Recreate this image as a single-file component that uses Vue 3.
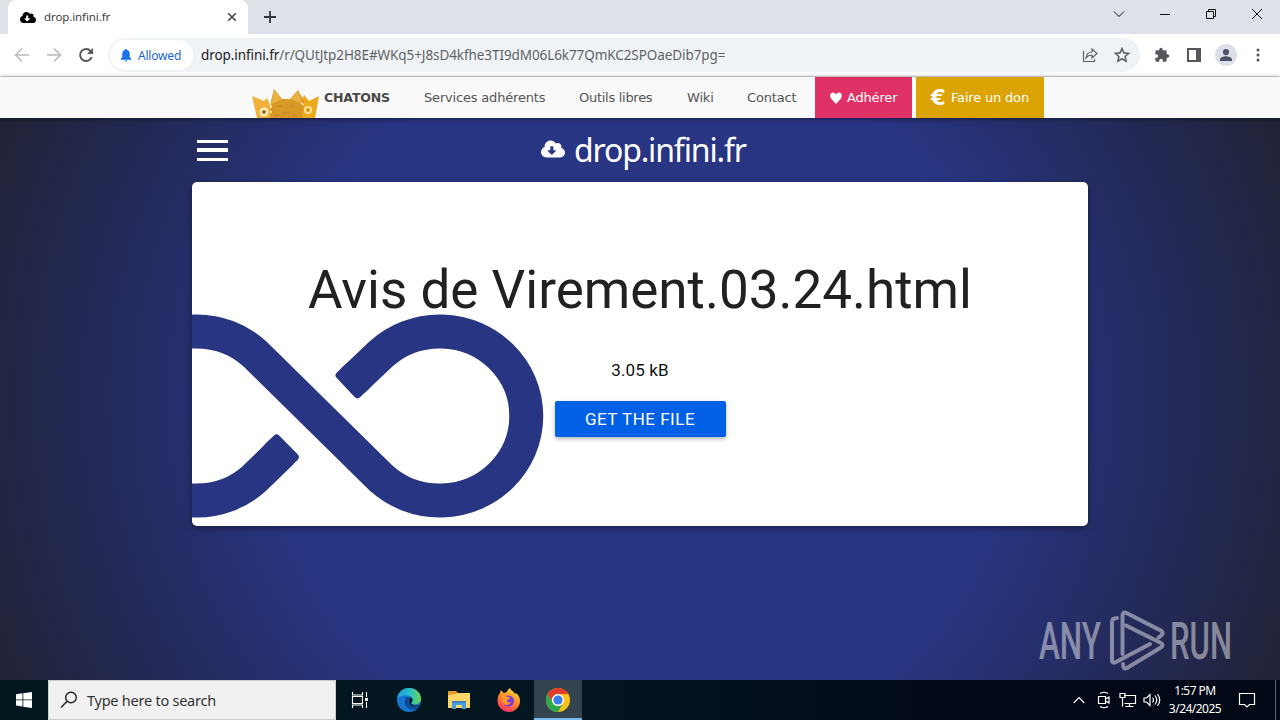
<template>
	<div class="screen">
		<!-- Tab strip -->
		<header class="tabs">
			<div class="tab">
				<svg class="favicon" viewBox="0 0 640 512"><path :d="cloudPath" /></svg>
				<span class="tab-title">drop.infini.fr</span>
				<svg class="tab-close" viewBox="0 0 10 10"><path d="M1.2 1.2l7.6 7.6M8.8 1.2L1.2 8.8" /></svg>
			</div>
			<svg class="tab-new" viewBox="0 0 12 12"><path d="M6 0v12M0 6h12" /></svg>
			<div class="window-controls">
				<svg viewBox="0 0 12 12"><path d="M1 3.5l5 5 5-5" /></svg>
				<svg viewBox="0 0 12 12"><path d="M1 6.5h10" /></svg>
				<svg viewBox="0 0 12 12"><path d="M1.5 3.5h7v7h-7zM3.5 3.5v-2h7v7h-2" /></svg>
				<svg viewBox="0 0 12 12"><path d="M1 1l10 10M11 1L1 11" /></svg>
			</div>
		</header>

		<!-- Toolbar -->
		<div class="toolbar">
			<div class="history">
				<svg class="off" viewBox="0 0 16 16"><path d="M15 8H2M8 1.5L1.5 8 8 14.5" /></svg>
				<svg class="off" viewBox="0 0 16 16"><path d="M1 8h13M8 1.5L14.5 8 8 14.5" /></svg>
				<svg viewBox="0 0 16 16"><path d="M13.7 10.2A6 6 0 1 1 12.6 4L14 5.6" /><path class="solid" d="M15 1v6H9z" /></svg>
			</div>
			<div class="address">
				<div class="chip">
					<svg viewBox="0 0 12 14"><path d="M6 0c.7 0 1.1.5 1.1 1.2C9 1.7 10 3.2 10 5.3V9l1.6 1.6v.9H.4v-.9L2 9V5.3C2 3.2 3 1.7 4.9 1.2 4.9.5 5.3 0 6 0zM4.6 12.3h2.8a1.4 1.4 0 0 1-2.8 0z" /></svg>
					<span>Allowed</span>
				</div>
				<p class="url"><span class="host">drop.infini.fr</span>/r/QUtJtp2H8E#WKq5+J8sD4kfhe3TI9dM06L6k77QmKC2SPOaeDib7pg=</p>
				<svg class="share" viewBox="0 0 16 16"><path d="M1.500 4v10.500h11V12M4 11c.5-4 2.500-6 6-6V2l5 4.500-5 4.500V8C7.500 8 5.500 9 4 11z" /></svg>
				<svg class="star" viewBox="0 0 16 16"><path d="M8 1.600l1.900 4.300 4.700.5-3.500 3.100 1 4.600L8 11.700l-4.100 2.400 1-4.600L1.400 6.400l4.700-.5z" /></svg>
			</div>
			<svg class="puzzle" viewBox="0 0 24 24"><path d="M20.500 11H19V7a2 2 0 0 0-2-2h-4V3.500a2.500 2.500 0 0 0-5 0V5H4a2 2 0 0 0-2 2v3.800h1.500a2.700 2.700 0 0 1 0 5.400H2V20a2 2 0 0 0 2 2h3.800v-1.500a2.700 2.700 0 0 1 5.400 0V22H17a2 2 0 0 0 2-2v-4h1.500a2.500 2.500 0 0 0 0-5z" /></svg>
			<svg class="panel" viewBox="0 0 14 14"><path d="M0 0h14v14H0zM2 2v10h7V2z" fill-rule="evenodd" /></svg>
			<svg class="profile" viewBox="0 0 22 22"><circle cx="11" cy="11" r="11" /><path d="M11 5a3 3 0 1 1 0 6.200A3 3 0 0 1 11 5zM5 17v-1.500c0-2 4-3.200 6-3.200s6 1.200 6 3.200V17z" /></svg>
			<svg class="dots" viewBox="0 0 4 14"><circle cx="2" cy="2" r="1.500" /><circle cx="2" cy="7" r="1.500" /><circle cx="2" cy="12" r="1.500" /></svg>
		</div>

		<!-- Association bar -->
		<nav class="infini-nav">
			<svg class="chatons" viewBox="0 0 67 30">
				<path fill="#f2b13c" d="M0 8l12 5 3-3 9 20H5z" />
				<path fill="#eba91b" d="M67 8l-10 5-5-6-9 23h20z" />
				<path fill="#d99a25" d="M22 1l8 10h8L46 2l6 11-2 17H18l1-17z" />
				<path fill="#e9b044" d="M22 1l8 10-11 5zM46 2l-8 9 12 4z" />
				<circle cx="12" cy="24" r="4.500" fill="#fff0bd" /><circle cx="12" cy="24" r="2" fill="#a46b22" />
				<circle cx="56" cy="22" r="4" fill="#ffe69a" /><circle cx="56" cy="22" r="1.900" fill="#dc920c" />
				<path class="face" d="M25 19q3-3 6 0M37 19q3-3 6 0M30 24q2 3 4 0 2 3 4 0M23 28l5-2M45 28l-5-2" />
				<path class="ray" d="M19 17v3M19 23v2M49 15l3 2" />
			</svg>
			<strong>CHATONS</strong>
			<a v-for="link in links" :key="link.text" :class="link.name">{{ link.text }}</a>
			<a class="button join">
				<svg viewBox="0 0 12 12"><path d="M6 12L1 6.500C-1 3.500.5.5 3 .5c1.500 0 2.500 1 3 2 .5-1 1.500-2 3-2 2.500 0 4 3 2 6z" /></svg>
				<span>Adhérer</span>
			</a>
			<a class="button give"><b>€</b><span>Faire un don</span></a>
		</nav>

		<main>
			<div class="title-row">
				<div class="burger"><i></i><i></i><i></i></div>
				<h1>
					<svg viewBox="0 0 640 512"><path :d="cloudPath" /></svg>
					<span>drop.infini.fr</span>
				</h1>
			</div>
			<section class="card">
				<svg class="infinity" viewBox="192 314 352 204">
					<path d="M192 331.500H196A86 84.500 0 0 1 255 354L381 478A86.500 84.500 0 1 0 381 354L353 380.500" />
					<path d="M192 500.500H196A86 84.500 0 0 0 255 478L282 451.500" />
					<rect y="-17" width="20" height="34" rx="4" transform="translate(345.700 387.500) rotate(-43.500)" />
					<rect y="-17" width="20" height="34" rx="4" transform="translate(288.500 445) rotate(135.500)" />
				</svg>
				<h2>Avis de Virement.03.24.html</h2>
				<p>3.05 kB</p>
				<button>GET THE FILE</button>
			</section>

			<svg class="watermark" viewBox="1036 608 200 64">
				<text x="1039" y="659" textLength="62" lengthAdjust="spacingAndGlyphs">ANY</text>
				<g>
					<path d="M1117 618q-5 0-5 4v38q0 4 4 2l34-18" />
					<path d="M1122.500 654v-38q0-5 4-3l35 18q3 3-3 6.500" />
					<path d="M1126 625.500l34 17q5 2.500 0 5.500l-33 20q-4 2-4-4" />
				</g>
				<text x="1170" y="659" textLength="62" lengthAdjust="spacingAndGlyphs">RUN</text>
			</svg>
		</main>

		<!-- Taskbar -->
		<footer class="taskbar">
			<div class="start"><svg viewBox="0 0 16 16"><path d="M0 2.200l6.500-.9v6.200H0zM7.300 1.200L16 0v7.500H7.300zM0 8.300h6.500v6.200L0 13.600zM7.300 8.300H16V16l-8.700-1.200z" /></svg></div>
			<div class="search">
				<svg viewBox="0 0 18 18"><circle cx="11" cy="6.500" r="5.300" /><path d="M7.200 10.300L1 16.500" /></svg>
				<span>Type here to search</span>
			</div>
			<div class="apps">
				<div class="app"><svg class="tasks" viewBox="0 0 18 18"><path d="M1.500 1v3h10V1M1.500 17v-3h10v3M1.500 5.500h10v7h-10zM15.500 1v5M15.500 11v6" /><path d="M14 7h3v3h-3z" fill="#fff" stroke="none" /></svg></div>
				<div class="app">
					<svg class="big" viewBox="0 0 24 24">
						<defs>
							<linearGradient id="edge-top" x1="0" x2="1"><stop offset="0" stop-color="#189ddf" /><stop offset=".55" stop-color="#29bfc9" /><stop offset="1" stop-color="#6bd64c" /></linearGradient>
						</defs>
						<circle cx="12" cy="12" r="12" fill="#1474cf" />
						<path fill="url(#edge-top)" d="M0 11C.7 4.500 5.500 0 12 0c7 0 12 5 12 10.500 0 4-3 6-6.200 6-2.600 0-3.800-1-3.300-2 .5-.8 1-1.500 1-2.500 0-2.500-2.500-4.500-6-4.500C5 7.500 1 9 0 11z" />
						<path fill="#0b4c98" d="M9.500 9C6 13 8 20 14 21.500c3 .7 6-.5 8-3-4 1.500-9.500 0-10.500-4.500-.3-1.500.2-3 1-4-.8-.8-1.800-1.200-3-1z" />
						<path fill="#041a26" d="M14.500 14.500c.5-.8 1-1.500 1-2.500 0-1-.7-2-1.700-2.700-1.300.8-2.200 2.500-1.800 4.700.6 3.500 4 5 7 4.500 1.800-.3 3-1 4-2-4 1.500-9.500.8-8.500-2z" />
					</svg>
				</div>
				<div class="app">
					<svg class="folder" viewBox="0 0 22 20"><path fill="#e49b25" d="M0 1h8l2 2h11v4H0z" /><path fill="#ffd768" d="M0 5l8-1 2-1h12v15H0z" /><path fill="#4a9edb" d="M4 19v-8h14v8h-4v-4H8v4z" /><path fill="#2f7dbd" d="M4 11h14v1.500H4z" /></svg>
				</div>
				<div class="app">
					<svg class="big" viewBox="0 0 24 24">
						<defs>
							<linearGradient id="fox" x1=".8" x2=".3" y2="1"><stop offset="0" stop-color="#ffe23c" /><stop offset=".5" stop-color="#ff8a25" /><stop offset="1" stop-color="#fb2c68" /></linearGradient>
						</defs>
						<path fill="url(#fox)" d="M3 5l.7-3L7 5l3-1c0-2 2-3 3-4 1 3 4 3 5 6l1-1c3 2 4 5 4 8 0 6-5 11-11 11S.5 19 .5 13C.5 10 1 7 3 5z" />
						<circle cx="11.500" cy="13" r="5.500" fill="#7b3bdc" />
						<path fill="#ff962b" d="M4 8c2-1 5-1 6 1 2 0 3 0 3 1s-3 1.500-3 3c0 1 2 2 4 1-1 3-5 4-7 2-2-1.500-3-5-3-8z" />
					</svg>
				</div>
				<div class="app active">
					<svg class="big" viewBox="0 0 24 24">
						<circle cx="12" cy="12" r="12" fill="#fbc116" />
						<path fill="#e33b2e" d="M1.600 6A12 12 0 0 1 22.400 6H12a6 6 0 0 0-5.200 9z" />
						<path fill="#2da94f" d="M1.600 6A12 12 0 0 0 12 24l5.200-9a6 6 0 0 1-10.400 0z" />
						<circle cx="12" cy="12" r="6" fill="#fff" /><circle cx="12" cy="12" r="4.600" fill="#367fe8" />
					</svg>
				</div>
			</div>
			<div class="tray">
				<svg class="up" viewBox="0 0 12 8"><path d="M.7 7L6 1.500 11.300 7" /></svg>
				<svg class="cam" viewBox="0 0 14 18"><path d="M3 2.500Q7 0 11 2.500M3 15.500q4 2.500 8 0M1.500 5.500h7v7h-7zM8.500 8L12 6v6l-3.500-2" /></svg>
				<svg class="net" viewBox="0 0 18 16"><path d="M5 3.500h11.500v8H5.500M10.500 11.500v3M6.500 14.500h8M1 1.500h5v4H1zM3.500 5.500v9" /></svg>
				<svg class="sound" viewBox="0 0 18 14"><path d="M1 5h2.500L7 1.500v11L3.500 9H1zM9.500 4.500q2 2.500 0 5M12 2.500q3.500 4.500 0 9M14.500 1q4.500 6 0 12" /></svg>
				<div class="clock"><span>1:57 PM</span><span>3/24/2025</span></div>
				<svg class="notes" viewBox="0 0 18 17"><path d="M1.500 1.500h15v11h-5L9 15l-2.500-2.500h-5z" /></svg>
				<i class="desktop"></i>
			</div>
		</footer>
	</div>
</template>

<script setup>
const cloudPath = 'M537.6 226.6c4.1-10.7 6.4-22.4 6.4-34.6 0-53-43-96-96-96-19.7 0-38.1 6-53.3 16.2C367 64.2 315.3 32 256 32c-88.4 0-160 71.6-160 160 0 2.7.1 5.4.2 8.1C40.2 219.8 0 273.2 0 336c0 79.5 64.5 144 144 144h368c70.7 0 128-57.3 128-128 0-61.9-44-113.6-102.4-125.4zM391 318L299.3 402c-6.2 6.2-16.4 6.2-22.6 0L185 318c-10.1-10.1-2.9-27.3 11.3-27.3H248V196c0-8.8 7.2-16 16-16h48c8.8 0 16 7.2 16 16v94.7h51.7c14.2 0 21.4 17.2 11.3 27.3z'

const links = [
	{ name: 'services', text: 'Services adhérents' },
	{ name: 'tools', text: 'Outils libres' },
	{ name: 'wiki', text: 'Wiki' },
	{ name: 'contact', text: 'Contact' },
]
</script>

<style>
body {
	margin: 0;
	overflow: hidden;
}
</style>

<style scoped>
* {
	box-sizing: border-box;
}
svg {
	display: block;
	flex: none;
}
.screen {
	display: flex;
	flex-direction: column;
	width: 1280px;
	height: 720px;
	font-family: "Noto Sans", "Open Sans", sans-serif;
	white-space: nowrap;
}

/* tabs */
.tabs {
	display: flex;
	height: 34px;
	padding-left: 8px;
	background: #dee1e8;
}
.tab {
	display: flex;
	align-items: center;
	width: 240px;
	padding: 0 11px 0 12px;
	background: #fff;
	border-radius: 8px 8px 0 0;
}
.favicon {
	width: 16px;
	height: 13px;
}
.tab-title {
	flex: 1;
	margin: -2px 0 0 8px;
	font-size: 11.5px;
	letter-spacing: -0.1px;
	color: #3c4043;
}
.tab-close {
	width: 10px;
	height: 10px;
	stroke: #45494d;
	stroke-width: 1.6;
}
.tab-new {
	width: 12px;
	height: 12px;
	margin: 11px 0 0 16px;
	stroke: #33363a;
	stroke-width: 1.8;
}
.window-controls {
	display: flex;
	gap: 34px;
	margin: 8px 17px 0 auto;
}
.window-controls svg {
	width: 12px;
	height: 12px;
	fill: none;
	stroke: #111;
	stroke-width: 1;
}

/* toolbar */
.toolbar {
	display: flex;
	align-items: center;
	height: 43px;
	padding-left: 14px;
	border-bottom: 1px solid #d9dadc;
	background: #fff;
}
.history {
	display: flex;
	gap: 16px;
	width: 94px;
}
.history svg {
	width: 16px;
	height: 16px;
	fill: none;
	stroke: #55585c;
	stroke-width: 1.9;
}
.history .off {
	stroke: #b9bbbe;
	stroke-width: 1.6;
}
.history .solid {
	fill: #55585c;
	stroke: none;
}
.address {
	display: flex;
	align-items: center;
	width: 1032px;
	height: 34px;
	padding-left: 2px;
	border-radius: 17px;
	background: #f0f3f5;
}
.chip {
	display: flex;
	align-items: center;
	width: 83px;
	height: 30px;
	padding-left: 10px;
	border-radius: 15px;
	background: #fff;
	color: #1a67d2;
	font-size: 12px;
	letter-spacing: -0.2px;
}
.chip svg {
	width: 12px;
	height: 13px;
	margin-right: 6px;
	fill: #1a73e8;
}
.url {
	width: 881px;
	margin: 0 0 0 8px;
	font-size: 13.5px;
	letter-spacing: -0.08px;
	color: #5f6368;
}
.host {
	color: #202124;
}
.share,
.star {
	width: 16px;
	height: 16px;
	fill: none;
	stroke: #5f6368;
	stroke-width: 1.2;
}
.star {
	margin-left: 16px;
	stroke-width: 1.6;
}
.puzzle {
	width: 16px;
	height: 16px;
	margin-left: 14px;
	fill: #54575b;
}
.panel {
	width: 14px;
	height: 14px;
	margin-left: 17px;
	fill: #54575b;
}
.profile {
	width: 22px;
	height: 22px;
	margin-left: 14px;
	fill: #4b5368;
}
.profile circle {
	fill: #dee0e9;
}
.dots {
	width: 4px;
	height: 14px;
	margin-left: 19px;
	fill: #505357;
}

/* association bar */
.infini-nav {
	position: relative;
	z-index: 1;
	display: flex;
	align-items: center;
	height: 41px;
	padding-left: 252px;
	background: #f9f9f9;
	box-shadow: 0 1px 5px rgba(0, 0, 0, 0.5);
	font: 13px "DejaVu Sans", sans-serif;
	letter-spacing: -0.18px;
	color: #555;
}
.chatons {
	width: 67px;
	height: 30px;
	align-self: flex-end;
}
.face {
	fill: none;
	stroke: #b98a2c;
	stroke-width: 1;
}
.ray {
	fill: none;
	stroke: #fff2bd;
	stroke-width: 1.5;
}
.infini-nav strong {
	width: 100px;
	margin-left: 5px;
	font-size: 12.5px;
	letter-spacing: -0.15px;
	color: #484848;
}
.services {
	width: 155px;
}
.tools {
	width: 108px;
	letter-spacing: -0.28px;
}
.wiki {
	width: 60px;
}
.contact {
	width: 68px;
}
.button {
	display: flex;
	align-items: center;
	height: 41px;
	color: #fff;
}
.join {
	width: 97px;
	padding-left: 15px;
	background: #df3166;
}
.join svg {
	width: 12px;
	height: 12px;
	margin-right: 5px;
	fill: #fff;
}
.give {
	width: 128px;
	margin-left: 4px;
	padding-left: 15px;
	background: #dba404;
}
.give b {
	width: 20px;
	font-size: 21px;
	line-height: 24px;
}

/* page */
main {
	position: relative;
	flex: 1;
	padding: 0 192px;
	background: radial-gradient(circle at 50% 50%, #283583 360px, #222648 620px, #212439 680px);
}
.title-row {
	display: flex;
	align-items: center;
	height: 64px;
	padding-left: 5px;
}
.burger {
	display: flex;
	flex-direction: column;
	justify-content: space-between;
	width: 31px;
	height: 21px;
}
.burger i {
	height: 3px;
	background: #fff;
}
.burger i:nth-child(2) {
	height: 4px;
}
h1 {
	display: flex;
	align-items: center;
	margin: 0 0 0 313px;
	font-size: 32px;
	font-weight: 400;
	line-height: 40px;
	color: #fff;
}
h1 svg {
	width: 24px;
	height: 20px;
	margin: -2px 9px 0 0;
	fill: #fff;
}
h1 span {
	letter-spacing: -1.15px;
}
.card {
	position: relative;
	display: flex;
	flex-direction: column;
	align-items: center;
	height: 344px;
	padding-top: 75px;
	border-radius: 5px;
	background: #fff;
	box-shadow: 0 2px 6px rgba(0, 0, 0, 0.4);
	font-family: Roboto, sans-serif;
	color: #212121;
}
.infinity {
	position: absolute;
	left: 0;
	top: 132px;
	width: 352px;
	height: 204px;
	fill: #283583;
}
.infinity path {
	fill: none;
	stroke: #283583;
	stroke-width: 34;
}
h2 {
	position: relative;
	margin: 0;
	font-size: 53px;
	font-weight: 400;
	line-height: 66px;
}
.card p {
	margin: 37px 0 0;
	font-size: 17px;
	line-height: 20px;
	letter-spacing: 0.1px;
	color: #111;
}
.card button {
	width: 171px;
	height: 36px;
	margin-top: 21px;
	padding: 0;
	border: 0;
	border-radius: 2px;
	background: #0060e6;
	box-shadow: 0 2px 4px rgba(0, 0, 0, 0.3);
	color: #fff;
	font: 17px Roboto, sans-serif;
	letter-spacing: 0.5px;
}
.watermark {
	position: absolute;
	right: 44px;
	bottom: 8px;
	width: 200px;
	height: 64px;
	overflow: visible;
	fill: #fff;
	font: 500 52px Roboto, sans-serif;
	opacity: 0.45;
}
.watermark g {
	fill: none;
	stroke: #fff;
	stroke-width: 4;
	stroke-linecap: round;
}

/* taskbar */
.taskbar {
	display: flex;
	height: 40px;
	background: linear-gradient(90deg, #03171f, #041620 45%, #020815 80%);
	color: #fff;
}
.start {
	display: flex;
	align-items: center;
	justify-content: center;
	width: 48px;
}
.start svg {
	width: 16px;
	height: 16px;
	fill: #fff;
}
.search {
	display: flex;
	align-items: center;
	width: 288px;
	padding-left: 11px;
	border: 1px solid #ccc;
	background: #f1f1f1;
	font-size: 14.5px;
	color: #333;
}
.search svg {
	width: 18px;
	height: 18px;
	margin-right: 9px;
	fill: none;
	stroke: #222;
	stroke-width: 1.4;
}
.search span {
	letter-spacing: -0.24px;
}
.apps {
	display: flex;
}
.app {
	display: flex;
	align-items: center;
	justify-content: center;
	width: 50px;
}
.app:first-child {
	width: 48px;
}
.app.active {
	width: 48px;
	border-top: 2px solid #34444f;
	border-bottom: 2px solid #76b9ed;
	background: #34444f;
}
.tasks {
	width: 18px;
	height: 18px;
	fill: none;
	stroke: #fff;
	stroke-width: 1.1;
}
.big {
	width: 24px;
	height: 24px;
}
.folder {
	width: 22px;
	height: 20px;
}
.tray {
	display: flex;
	align-items: center;
	margin-left: auto;
}
.tray svg {
	fill: none;
	stroke: #fff;
	stroke-width: 1.2;
}
.up {
	width: 12px;
	height: 8px;
}
.cam {
	width: 14px;
	height: 18px;
	margin-left: 12px;
}
.net {
	width: 18px;
	height: 16px;
	margin-left: 8px;
}
.sound {
	width: 18px;
	height: 14px;
	margin-left: 6px;
}
.clock {
	display: flex;
	flex-direction: column;
	align-items: center;
	width: 62px;
	margin: 0 12px 0 3px;
	font-size: 12px;
	line-height: 18px;
	letter-spacing: -0.52px;
}
.notes {
	width: 18px;
	height: 17px;
}
.desktop {
	width: 1px;
	height: 40px;
	margin: 0 4px 0 19px;
	background: #59616b;
}
</style>
